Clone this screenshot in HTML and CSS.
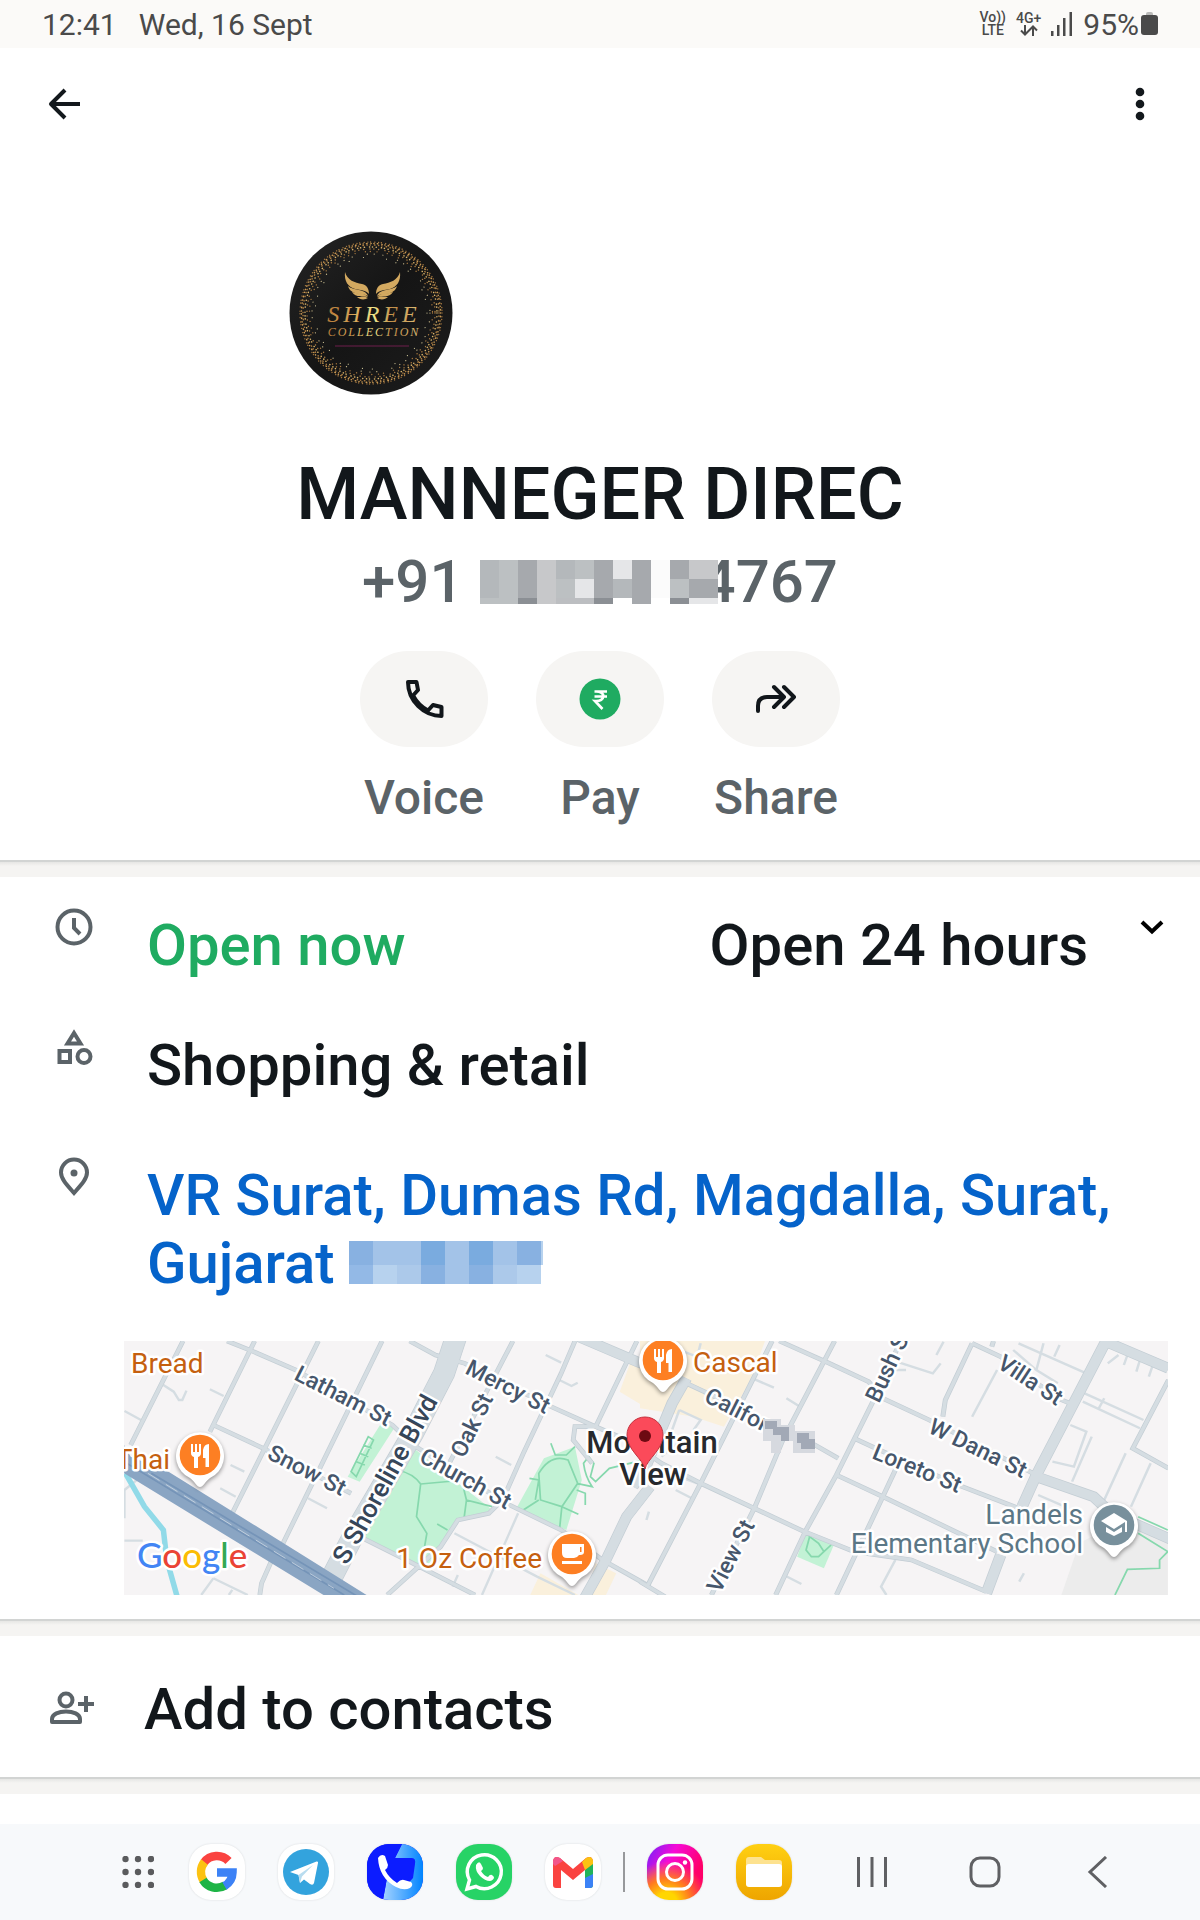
FILE: index.html
```html
<!DOCTYPE html>
<html lang="en">
<head>
    <meta charset="UTF-8">
    <meta name="viewport" content="width=device-width, initial-scale=1.0">
    <title>Contact info</title>
    <link rel="stylesheet" href="styles.css">
</head>
<body>
    <div class="statusbar">
        <span class="time">12:41</span>
        <span class="date">Wed, 16 Sept</span>
        <div class="status-icons">
            <span class="stack"><span>Vo))</span><span>LTE</span></span>
            <span class="stack"><span>4G+</span>
                <svg width="18" height="11" viewBox="0 0 18 11" fill="none" stroke="#4a4a4a" stroke-width="2"><path d="M5 0V9M1 5.500L5 9.500L9 5.500M13 11V2M9 5.500L13 1.500L17 5.500"/></svg>
            </span>
            <svg width="22" height="24" viewBox="0 0 22 24" fill="#4a4a4a"><path d="M0 19h2.500v5H0zM6 13h2.500v11H6zM12 6h2.500v18H12zM18.500 0H21v24h-2.500z"/></svg>
            <span class="battery">95%</span>
            <svg width="17" height="24" viewBox="0 0 17 24"><rect x="5" y="0" width="7" height="5" rx="2" fill="#b9b9b8"/><rect x="0" y="3" width="17" height="20" rx="3" fill="#4a4a4a"/></svg>
        </div>
    </div>

    <div class="topbar">
        <button class="icon-btn" aria-label="Back">
            <svg width="40" height="40" viewBox="0 0 40 40" fill="none" stroke="#13181c" stroke-width="4"><path d="M36 20H7M21 6L7 20L21 34" stroke-linejoin="round"/></svg>
        </button>
        <button class="icon-btn" aria-label="More options">
            <svg width="40" height="40" viewBox="0 0 40 40" fill="#13181c"><circle cx="20" cy="8" r="4.300"/><circle cx="20" cy="20" r="4.300"/><circle cx="20" cy="32" r="4.300"/></svg>
        </button>
    </div>

    <div class="profile">
        <svg class="avatar" viewBox="0 0 164 164">
            <defs>
                <linearGradient id="gold" x1="0" x2="1">
                    <stop offset="0" stop-color="#b87c3a"/><stop offset=".3" stop-color="#d8a85a"/><stop offset=".5" stop-color="#f0e58a"/><stop offset=".7" stop-color="#c08c48"/><stop offset="1" stop-color="#dfc07a"/>
                </linearGradient>
                <linearGradient id="dark" x1="0" y1="0" x2="1" y2="1"><stop offset="0" stop-color="#242424"/><stop offset=".5" stop-color="#151515"/><stop offset="1" stop-color="#1c1c1c"/></linearGradient>
            </defs>
            <circle cx="82" cy="82" r="81.500" fill="url(#dark)"/>
            <g fill="none" stroke="#a9793f" stroke-linecap="round">
                <circle cx="82" cy="82" r="71" stroke-width="1.300" stroke-dasharray=".1 3.700 .1 2.600 .1 4.300"/>
                <circle cx="82" cy="82" r="69.500" stroke-width="1.500" stroke="#c99a55" stroke-dasharray=".1 3.300 .5 4.100 .1 2.900"/>
                <circle cx="82" cy="82" r="68" stroke-width="1.500" stroke-dasharray=".1 3.100 .1 4.300 .4 3.700"/>
                <circle cx="82" cy="82" r="66" stroke-width="1.500" stroke="#d9b56c" stroke-dasharray=".1 3.700 .1 5.100 .1 2.900"/>
                <circle cx="82" cy="82" r="64" stroke-width="1.400" stroke-dasharray=".1 4.700 .1 6.300 .1 3.900"/>
                <circle cx="82" cy="82" r="61.500" stroke-width="1.300" stroke-dasharray=".1 6.700 .1 10.300 .1 4.900"/>
                <circle cx="82" cy="82" r="59" stroke-width="1.200" stroke="#c9b98a" stroke-dasharray=".1 8.700 .1 15.300 .1 6.900"/>
                <circle cx="82" cy="82" r="56" stroke-width="1.100" stroke="#d8cfa0" stroke-dasharray=".1 14.700 .1 23.300 .1 9.900"/>
            </g>
            <g id="wing" fill="#d3a960">
                <path d="M56 41C58 49 66 52 73 53C78 54 80 58 80 63C77 59 71 59 66 58C59 56 55 50 56 41Z"/>
                <path d="M59 55C64 60 76 57 79 65C74 62 62 65 59 55Z"/>
                <path d="M63 61C68 63 75 61 79 66C74 65 67 67 63 61Z"/>
                <path d="M68 66C72 66 76 65 79 67C76 69 71 69 68 66Z"/>
            </g>
            <use href="#wing" transform="matrix(-1 0 0 1 167 0)"/>
            <text class="logo-name" x="85" y="91" text-anchor="middle">SHREE</text>
            <text class="logo-sub" x="85" y="105" text-anchor="middle">COLLECTION</text>
            <path d="M46 115H120" stroke="#6e1f4c" stroke-width="1"/>
        </svg>
        <h1>MANNEGER DIREC</h1>
        <p class="phone">
            <span>+91</span>
            <svg class="hidden-digits" width="238" height="44" viewBox="0 0 238 44" shape-rendering="crispEdges">
                <path fill="#b4b8bb" d="M0 0h19v38H0zM133 19h19v19h-19zM76 0h19v19H76z"/>
                <path fill="#bcc0c2" d="M19 0h19v38H19zM95 0h19v19H95zM76 19h19v19H76zM190 19h19v19h-19zM0 38h38v6H0z"/>
                <path fill="#a6a9ad" d="M38 0h19v38H38zM114 0h19v38h-19zM152 0h19v44h-19zM190 0h19v19h-19zM209 19h29v19h-29z"/>
                <path fill="#c7c8ca" d="M57 0h19v44H57zM209 0h29v19h-29z"/>
                <path fill="#e5e6e8" d="M95 19h19v19H95zM133 0h19v19h-19zM209 38h29v6h-29z"/>
                <path fill="#bcbec1" d="M76 38h38v6H76z"/>
                <path fill="#8b8f94" d="M38 38h19v6H38zM114 38h19v6h-19zM190 38h19v6h-19z"/>
                <path fill="#fbfbfb" d="M171 0h19v38h-19z"/>
            </svg>
            <span>4767</span>
        </p>
        <div class="actions">
            <button class="action">
                <span class="pill"><svg width="48" height="48" viewBox="0 0 48 48" fill="none" stroke="#11161a" stroke-width="4" stroke-linejoin="round"><path d="M8 7H16.500L18 15L13 20.500C17 28 21 32 28 35.500L33 30L41.500 32V41C24 41 8 26 8 7Z"/></svg></span>
                <span class="label">Voice</span>
            </button>
            <button class="action">
                <span class="pill"><svg width="48" height="48" viewBox="0 0 48 48"><circle cx="24" cy="24" r="20.500" fill="#1fab61"/><path d="M18.500 16.500H31M18.500 21.500H31M19 16.500C30 15.500 30 27 19 26L26.500 34" fill="none" stroke="#fff" stroke-width="2.600"/></svg></span>
                <span class="label">Pay</span>
            </button>
            <button class="action">
                <span class="pill"><svg width="48" height="48" viewBox="0 0 48 48" fill="none" stroke="#11161a" stroke-width="4" stroke-linecap="round" stroke-linejoin="round"><path d="M6 36V31Q6 22 15 22H31M22 12L32 22L22 32M32 12L42 22L32 32"/></svg></span>
                <span class="label">Share</span>
            </button>
        </div>
    </div>

    <div class="divider"></div>

    <div class="info">
        <div class="row">
            <svg class="row-icon" viewBox="0 0 48 48"><circle cx="24" cy="24" r="16.500"/><path d="M24 15V25L30 31"/></svg>
            <span class="open">Open now</span>
            <span class="hours">Open 24 hours</span>
            <button class="chevron" aria-label="Show hours">
                <svg width="48" height="48" viewBox="0 0 48 48" fill="none" stroke="#000" stroke-width="4"><path d="M14 19L24 28.500L34 19"/></svg>
            </button>
        </div>
        <div class="row category">
            <svg class="row-icon" viewBox="0 0 48 48"><path d="M24 10L17.500 20.500H30.500ZM9.500 28H20V39H9.500Z"/><circle cx="34" cy="33.500" r="6.500"/></svg>
            <span>Shopping &amp; retail</span>
        </div>
        <div class="row address">
            <svg class="row-icon" viewBox="0 0 48 48"><path d="M24 40C17 32 11 26 11 19.500A13 13 0 0 1 37 19.500C37 26 31 32 24 40Z"/><circle cx="24" cy="20" r="3.500" fill="#5b6368" stroke="none"/></svg>
            <a href="#map">VR Surat, Dumas Rd, Magdalla, Surat, Gujarat <svg width="194" height="44" viewBox="0 0 194 44" shape-rendering="crispEdges"><path fill="#a3c3e8" d="M0 0h192v43H0z"/><path fill="#88b1e1" d="M0 0h24v24H0zM168 0h24v24h-24zM72 24h24v19H72zM120 24h24v19h-24z"/><path fill="#7aabdf" d="M72 0h24v24H72zM120 0h24v24h-24z"/><path fill="#93b9e6" d="M0 24h24v19H0z"/><path fill="#b7d2ee" d="M24 24h24v19H24zM168 24h24v19h-24zM192 0h2v24h-2z"/><path fill="#acc9ea" d="M48 24h24v19H48zM144 24h24v19h-24z"/></svg></a>
        </div>

        <svg class="map" id="map" viewBox="0 0 1044 254">
            <defs>
                <g id="pin">
                    <path class="pin-shape" d="M0 32C-3 32-5 27-10 23A24 24 0 1 1 10 23C5 27 3 32 0 32Z"/>
                    <circle r="20.300"/>
                </g>
                <g id="fork" fill="#fff">
                    <path d="M-9-11h2v8h2v-8h2v8h2v-8h2v9q0 3-3 4v11h-4V2q-3-1-3-4zM9-11V12H5.500V3H3V-5Q4-11 9-11Z"/>
                </g>
            </defs>
            <rect width="1044" height="254" fill="#f6f4f5"/>

            <!-- west part of the map -->
            <g transform="translate(-14 -11) scale(.3444 .3333)">
                <path class="shop" d="M1510 100L1568 130V240L1480 185ZM1250 730L1360 795H1220ZM1410 700L1470 730L1440 795H1380Z"/>
                <path class="park" d="M870 345L1110 540L1010 570L960 650L920 710L880 705L735 620ZM790 275L825 295L725 455L690 440ZM1260 385L1350 350L1370 450L1325 600L1180 535Z"/>
                <g class="paths">
                    <path d="M835 420Q880 430 902 462L890 560L920 610L910 670M902 462L1030 450M1022 455L1035 510L1110 530M1035 510L1028 565M950 582L980 600M750 320L700 425L715 440L765 330ZM725 370L750 380M715 395L740 405M735 345L760 355M1280 340L1293 375H1325L1350 350M1245 430Q1280 370 1330 390L1358 460L1312 530L1250 510ZM1218 445L1245 450L1235 510M1200 540L1245 510M1312 530L1305 600M1312 530L1360 553M1355 460L1400 470Q1380 440 1375 400L1390 380L1405 400L1395 440L1410 455L1450 415L1568 385M1355 480L1380 490V525"/>
                </g>
                <g class="minor">
                    <path d="M155 165L185 185L200 210H210L222 182M290 178L330 198M42 243L90 270M350 405L390 425M320 475L365 500M575 505L630 535M1265 75L1310 98M1305 150L1340 168L1358 158M1120 380L1165 405M42 632H95M42 565V480L90 440M265 795L300 745M345 795L355 780M300 745L400 795M1185 550L1080 795M1000 610L1240 740L1350 795M1010 735L995 770"/>
                </g>
                <g class="street">
                    <path id="w1" d="M212 33L60 345M420 33L290 305M605 33L355 550M790 33L500 645M1170 33L985 400M1350 33L1310 130L1200 370L1140 510L1100 550L1010 570L960 650L805 795M1530 33L1410 290L1350 290L1345 330L1400 400M340 33L410 62L540 120L820 285L880 345L1150 520L1310 600L1430 690L1568 770M300 285L445 355L700 490M870 33L945 75L1030 100L1270 225L1410 290L1568 360M470 690L440 760L435 795M735 625L870 695L1060 795"/>
                </g>
                <path class="wide edge" d="M1360 20L1530 95L1568 110M1568 470L1500 560L1440 690L1375 810"/>
                <path class="avenue edge" d="M1005 20L970 130L880 310L710 610L625 780"/>
                <use href="#w1" class="street-fill"/>
                <path class="wide" d="M1360 20L1530 95L1568 110M1568 470L1500 560L1440 690L1375 810"/>
                <path class="avenue" d="M1005 20L970 130L880 310L710 610L625 780"/>
                <path d="M45 430L100 530L155 600L165 690L195 800" fill="none" stroke="#91dae8" stroke-width="16"/>
                <path d="M41 345L60 380L170 425L745 795H620L41 430Z" fill="#8aa5c3"/>
                <path d="M41 395L680 795M120 430L720 800" fill="none" stroke="#7594b8" stroke-width="5"/>
                <path d="M110 430L650 775" fill="none" stroke="#dce3ea" stroke-width="2" stroke-dasharray="40 22"/>
            </g>

            <!-- east part of the map -->
            <g transform="translate(516 -11) scale(.3571 .3333)">
                <path class="shop" d="M0 33H350L310 150L235 290L150 260L0 235Z"/>
                <path fill="#ececec" d="M1230 640L1370 560L1478 620V795H1180Z"/>
                <path class="park" d="M465 605L545 640L515 715L440 680Z"/>
                <path class="paths" d="M465 605L475 620L465 660L480 680H500L515 665L500 640L475 620M515 665L535 645M1395 560L1478 600M1395 610L1478 665L1455 690V715L1365 718L1330 795"/>
                <g class="minor">
                    <path d="M315 145L375 173M410 205L445 228M690 85L820 130L842 100M850 35L830 75M408 738L452 762M25 545L18 570M1075 730L1062 755M715 120L745 120M1000 120L930 260M1430 400L1375 530M1360 370L1300 510M1265 320L1210 455M1205 285L1250 305L1215 410L1155 395M1245 190L1410 270M1240 215L1400 295M1300 205L1285 235M1045 60L1110 120L1170 160M1060 40L1250 130M1130 40L1110 120M1175 45L1160 80M1310 100L1340 75M1365 75L1355 105M1400 90L1390 125M1435 108L1425 140M1115 495L1190 530M110 240L170 270L150 300M60 380L130 320M100 480L145 505M60 420L160 460M170 40L160 80L60 40M110 240L90 300M715 690L675 770L690 795"/>
                </g>
                <g class="street">
                    <path id="e1" d="M370 33L170 460L20 770M545 33L400 330L320 535L200 795M730 33L650 220L550 435L465 600L380 795M715 420L680 500L550 795M930 40L855 210L848 260M990 33L985 50M1480 150L1380 355L1480 415M0 355L60 400L170 460L320 535L460 605L600 665L760 690L970 785M130 160L190 190L340 270L490 345L555 385M550 435L680 500L1000 665M600 325L650 350L890 465L1060 535M390 33L520 95L640 155L680 205L810 270L1110 435M930 40L1010 80L1170 205L1215 225M0 755L70 800"/>
                </g>
                <path class="wide edge" d="M130 145L90 220L20 400L-20 470M1305 33L1110 435L1070 530M1300 33L1480 115M1010 675L970 790M1110 440L1270 500L1320 550L1490 630"/>
                <use href="#e1" class="street-fill"/>
                <path class="wide" d="M130 145L90 220L20 400L-20 470M1305 33L1110 435L1070 530M1300 33L1480 115M1010 675L970 790M1110 440L1270 500L1320 550L1490 630"/>
            </g>

            <g class="street-name">
                <text transform="translate(169 38) rotate(27)">Latham St</text>
                <text transform="translate(142 117) rotate(27)">Snow St</text>
                <text transform="translate(340 32) rotate(27)">Mercy St</text>
                <text transform="translate(294 120) rotate(29)">Church St</text>
                <text transform="translate(340 118) rotate(-64)">Oak St</text>
                <text class="big" transform="translate(223 225) rotate(-61)">S Shoreline Blvd</text>
                <text transform="translate(755 63) rotate(-65)">Bush S</text>
                <text transform="translate(596 253) rotate(-63)">View St</text>
                <text transform="translate(579 60) rotate(27)">Californ</text>
                <text transform="translate(747 117) rotate(22)">Loreto St</text>
                <text transform="translate(803 91) rotate(26)">W Dana St</text>
                <text transform="translate(872 26) rotate(33)">Villa St</text>
            </g>
            <g shape-rendering="crispEdges">
                <path fill="#d6d9df" d="M639 78h18v6h14v16h-14v12h-10V100h-8zM669 90h22v22h-22z"/>
                <path fill="#a2a9b6" d="M641 80h12v6h12v14h-8v-6h-8v-6h-8zM673 92h12v6h6v10h-14v-6h-4z"/>
            </g>
            <g class="place">
                <text x="7" y="32">Bread</text>
                <text x="46" y="128" text-anchor="end">Thai</text>
                <text x="569" y="31">Cascal</text>
                <text x="418" y="227" text-anchor="end">1 Oz Coffee</text>
            </g>
            <g class="school">
                <text x="959" y="183" text-anchor="end">Landels</text>
                <text x="959" y="212" text-anchor="end">Elementary School</text>
            </g>
            <g class="town">
                <text x="528" y="112" text-anchor="middle">Mountain</text>
                <text x="529" y="144" text-anchor="middle">View</text>
            </g>
            <text class="google" x="13" y="227"><tspan fill="#4285f4">G</tspan><tspan fill="#ea4335">o</tspan><tspan fill="#fbbc05">o</tspan><tspan fill="#4285f4">g</tspan><tspan fill="#34a853">l</tspan><tspan fill="#ea4335">e</tspan></text>

            <g fill="#fd7f23">
                <g transform="translate(76 114)"><use href="#pin"/><use href="#fork"/></g>
                <g transform="translate(539 19)"><use href="#pin"/><use href="#fork"/></g>
                <g transform="translate(448 213)"><use href="#pin"/><path fill="#fff" d="M-10-10H12V-2Q12 1 8 1H7Q5 4 2 4H-5Q-10 4-10-1ZM8-7V-2H9.500V-7ZM-10 7H10V10H-10Z" fill-rule="evenodd"/></g>
            </g>
            <g transform="translate(990 184)" fill="#78909c"><use href="#pin"/><path fill="#fff" d="M0-12L13-4V7H11V-3L0 4L-13-4ZM-8 2L0 7L8 2V7L0 11L-8 7Z"/></g>
            <g transform="translate(521 95)">
                <path d="M0 33C-2 23-18 14-18-1A18 18 0 0 1 18-1C18 14 2 23 0 33Z" fill="#fb4a5a" stroke="#c5333f" stroke-width="1"/>
                <circle r="6" fill="#6d0a12"/>
            </g>
        </svg>
    </div>

    <div class="divider"></div>

    <button class="add-contact">
        <svg width="48" height="48" viewBox="0 0 48 48" fill="none" stroke="#5b6368" stroke-width="4"><circle cx="18" cy="15" r="6.500"/><path d="M4 37V34C4 24 32 24 32 34V37Z" stroke-linejoin="round"/><path d="M30 19H46M38 11V27"/></svg>
        <span>Add to contacts</span>
    </button>

    <div class="divider"></div>

    <div class="taskbar">
        <div class="dock">
            <button class="apps" aria-label="Apps">
                <svg width="32" height="32" viewBox="0 0 32 32" fill="#5a5b5d"><circle cx="3.500" cy="3" r="3.200"/><circle cx="16" cy="3" r="3.200"/><circle cx="29" cy="3" r="3.200"/><circle cx="3.500" cy="16" r="3.200"/><circle cx="16" cy="16" r="3.200"/><circle cx="29" cy="16" r="3.200"/><circle cx="3.500" cy="29" r="3.200"/><circle cx="16" cy="29" r="3.200"/><circle cx="29" cy="29" r="3.200"/></svg>
            </button>
            <button class="app" aria-label="Google">
                <svg viewBox="0 0 56 56" fill="none" stroke-width="8.500">
                    <path d="M39.500 17A16 16 0 0 0 15 18.500" stroke="#fa4340"/>
                    <path d="M15.500 18A16 16 0 0 0 14.500 36.500" stroke="#fcc212"/>
                    <path d="M14 36A16 16 0 0 0 36 41.500" stroke="#1eb446"/>
                    <path d="M35.500 42A16 16 0 0 0 43.500 28.500H28" stroke="#3c82f6"/>
                </svg>
            </button>
            <button class="app" aria-label="Telegram">
                <svg viewBox="0 0 56 56"><circle cx="28" cy="28" r="23" fill="#33a3dd"/><path d="M12 28L38.500 17.500Q40.500 17 40 19L36 39Q35 42 32 40L26 35.500L22 39L20.500 31Z" fill="#fff"/><path d="M20.500 31L35 21L24 32.500L22 39Z" fill="#b8dcef"/></svg>
            </button>
            <button class="app phone-app" aria-label="Phone">
                <svg viewBox="0 0 56 56">
                    <defs><linearGradient id="call"><stop offset="0" stop-color="#a5d3ff"/><stop offset="1" stop-color="#0084ff"/></linearGradient></defs>
                    <path d="M35 0H56V56H16L20 34L28 14Z" fill="url(#call)"/>
                    <path d="M35 0L28 14H45Q49 14 48 20L46 34L36 45L20 34L16 56H0V0Z" fill="#0c1cff"/>
                    <path d="M11 14Q14 9 18 12L21 21Q21 24 18 26Q22 34 30 39Q34 35 37 36L44 38Q47 41 43 44Q37 47 29 43Q12 34 11 14Z" fill="#fff"/>
                </svg>
            </button>
            <button class="app whatsapp-app" aria-label="WhatsApp">
                <svg viewBox="0 0 56 56"><path d="M11 45L13.500 36A17 17 0 1 1 20 42.500Z" fill="none" stroke="#fff" stroke-width="3.500"/><path d="M20 21Q23 16 25 20L27 24Q27 26 25 27Q28 32 32 33Q34 30 36 31L38 33Q38 36 34 37Q29 37 24 32Q19 27 20 21Z" fill="#fff"/></svg>
            </button>
            <button class="app" aria-label="Gmail">
                <svg viewBox="0 0 56 56">
                    <path d="M8 17V41Q8 44 11 44H16V25Z" fill="#fa4340"/>
                    <path d="M48 17V41Q48 44 45 44H40V25Z" fill="#22b35a"/>
                    <path d="M40 34L48 30V41Q48 44 45 44H40Z" fill="#3c82f6"/>
                    <path d="M8 17Q9 11 15 14L28 25L41 14Q47 11 48 17L46 21L28 36L10 21Z" fill="#fa4340"/>
                    <path d="M8 17Q9 11 15 14L18 17L10 22L8 20Z" fill="#f2568a"/>
                    <path d="M48 17Q47 11 41 14L37 18L40 26L48 20Z" fill="#fcc212"/>
                </svg>
            </button>
            <span class="dock-line"></span>
            <button class="app insta-app" aria-label="Instagram">
                <svg viewBox="0 0 56 56" fill="none" stroke="#fff" stroke-width="3"><rect x="11" y="11" width="34" height="34" rx="10"/><circle cx="28" cy="28" r="8.500"/><circle cx="38" cy="18.500" r="2.200" fill="#fff" stroke="none"/></svg>
            </button>
            <button class="app files-app" aria-label="My Files">
                <svg viewBox="0 0 56 56"><path d="M10 16Q10 13 13 13H25L29 16H43Q46 16 46 19V30H10Z" fill="#fde28f"/><rect x="10" y="20" width="36" height="23" rx="3" fill="#fff"/></svg>
            </button>
        </div>
        <div class="system">
            <button aria-label="Recents"><svg width="32" height="32" viewBox="0 0 32 32" fill="#5f6063"><path d="M1 1h3v30H1zM14.500 1h3v30h-3zM28 1h3v30h-3z"/></svg></button>
            <button aria-label="Home"><svg width="32" height="32" viewBox="0 0 32 32" fill="none" stroke="#5f6063" stroke-width="3"><rect x="2" y="2" width="28" height="28" rx="9"/></svg></button>
            <button aria-label="Back"><svg width="32" height="32" viewBox="0 0 32 32" fill="none" stroke="#5f6063" stroke-width="3"><path d="M24 1L8 16L24 31"/></svg></button>
        </div>
    </div>
</body>
</html>
```
FILE: styles.css
```css
body {
    margin: 0;
    min-height: 100vh;
    display: flex;
    flex-direction: column;
    background-color: #fff;
    color: #12171b;
    font-family: Roboto, Arial, sans-serif;
    font-weight: 500;
}
button {
    padding: 0;
    border: none;
    background: none;
    color: inherit;
    font: inherit;
    cursor: pointer;
}
svg {
    display: block;
}
.statusbar {
    display: flex;
    align-items: center;
    height: 48px;
    padding: 0 42px;
    background-color: #fbfaf8;
    color: #4a4a4a;
    font-size: 30px;
    font-weight: 400;
}
.date {
    margin-left: 22px;
}
.status-icons {
    display: flex;
    align-items: center;
    gap: 10px;
    margin-left: auto;
}
.stack {
    display: flex;
    flex-direction: column;
    align-items: center;
    font-size: 14px;
    line-height: 13px;
    font-weight: 500;
}
.battery {
    margin-right: -8px;
}
.topbar {
    display: flex;
    justify-content: space-between;
    padding: 36px 40px 36px 44px;
}
.profile {
    padding: 71px 24px 34px;
}
.avatar {
    width: 164px;
    height: 164px;
    margin-left: 23%;
}
.logo-name, .logo-sub {
    font-family: "Liberation Serif", serif;
    font-style: italic;
    font-weight: 400;
    fill: url(#gold);
}
.logo-name {
    font-size: 24px;
    letter-spacing: 4px;
}
.logo-sub {
    font-size: 12px;
    letter-spacing: 2px;
}
h1 {
    margin: 58px 0 0;
    font-size: 72px;
    line-height: 84px;
    font-weight: 500;
    text-align: center;
}
.phone {
    display: flex;
    justify-content: center;
    margin: 10px 0 34px;
    color: #5b6368;
    font-size: 60px;
    line-height: 70px;
}
.hidden-digits {
    position: relative;
    margin: 13px -16px 0 16px;
}
.actions {
    display: flex;
    justify-content: center;
    gap: 48px;
}
.action {
    width: 128px;
}
.pill {
    display: flex;
    align-items: center;
    justify-content: center;
    height: 96px;
    margin-bottom: 23px;
    border-radius: 48px;
    background-color: #f6f5f3;
}
.label {
    display: block;
    color: #5b6368;
    font-size: 48px;
    line-height: 56px;
}
.divider {
    height: 15px;
    border-top: 2px solid #d2d4d3;
    background: linear-gradient(#e6e6e4, #f5f4f2 4px);
}
.info {
    padding: 34px 24px 24px 50px;
    font-size: 58px;
    line-height: 68px;
}
.row {
    display: flex;
    align-items: flex-start;
}
.row-icon {
    flex: none;
    width: 48px;
    height: 48px;
    margin: -8px 49px 0 0;
    fill: none;
    stroke: #5b6368;
    stroke-width: 4px;
}
.open {
    color: #1fab61;
}
.hours {
    margin-left: auto;
}
.chevron {
    margin: -8px 0 0 40px;
}
.category {
    margin-top: 52px;
}
.address {
    margin-top: 62px;
}
.address a {
    color: #0563ca;
    text-decoration: none;
}
.address a svg {
    display: inline-block;
    vertical-align: -2px;
}
.map {
    width: calc(100% - 82px);
    margin: 44px 8px 0 74px;
}
.map text {
    paint-order: stroke;
    stroke: #fff;
    stroke-width: 5px;
    stroke-linejoin: round;
}
.shop {
    fill: #faf0dc;
}
.park {
    fill: #c2f2d5;
}
.paths {
    fill: none;
    stroke: #86d8ad;
    stroke-width: 5px;
}
.minor, .street, .street-fill, .wide, .avenue {
    fill: none;
    stroke: #d5dde2;
}
.minor {
    stroke-width: 7px;
}
.street {
    stroke: #c3cdd4;
    stroke-width: 14px;
}
.street-fill {
    stroke-width: 10px;
}
.wide {
    stroke-width: 28px;
}
.wide.edge {
    stroke: #c3cdd4;
    stroke-width: 32px;
}
.avenue {
    stroke-width: 60px;
}
.avenue.edge {
    stroke: #c3cdd4;
    stroke-width: 64px;
}
.street-name {
    fill: #46566b;
    font-size: 23px;
}
.street-name .big {
    font-size: 26px;
    fill: #364659;
}
.place {
    fill: #c5600f;
    font-size: 28px;
    font-weight: 400;
}
.school {
    fill: #5b7786;
    font-size: 28px;
    font-weight: 400;
}
.town {
    fill: #27292d;
    font-size: 31px;
}
.google {
    font-family: Lato, sans-serif;
    font-size: 35px;
    font-weight: 500;
}
.pin-shape {
    fill: #fff;
    filter: drop-shadow(0 2px 2px rgba(0, 0, 0, 0.4));
}
.add-contact {
    display: flex;
    align-items: center;
    gap: 48px;
    padding: 39px 48px 34px;
    font-size: 58px;
    line-height: 68px;
}
.taskbar {
    display: flex;
    align-items: center;
    justify-content: space-between;
    height: 96px;
    margin-top: auto;
    padding: 0 86px 0 122px;
    background-color: #f7f9fb;
}
.dock {
    display: flex;
    align-items: center;
    gap: 33px;
}
.apps {
    margin-right: 2px;
}
.app {
    width: 56px;
    height: 56px;
    border-radius: 22px;
    background-color: #fff;
    box-shadow: 0 0 2px #d5d8da;
    overflow: hidden;
}
.phone-app {
    background-color: #0c1cff;
}
.whatsapp-app {
    background-color: #27d366;
}
.insta-app {
    background: radial-gradient(circle at 35% 105%, #ffd600 15%, #ff7a20 35%, transparent 60%), linear-gradient(120deg, #6a22ff, #f60ad6 35%, #ff0069 75%);
}
.files-app {
    background: linear-gradient(#ffd012, #eea500);
}
.dock-line {
    width: 2px;
    height: 40px;
    margin: 0 -11px;
    background-color: #97999b;
}
.system {
    display: flex;
    gap: 81px;
}
```
